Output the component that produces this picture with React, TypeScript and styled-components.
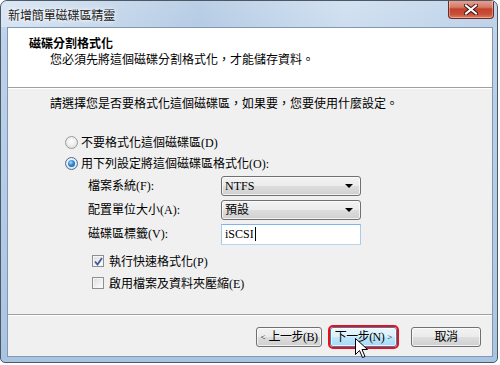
import React from "react";
import styled, { createGlobalStyle } from "styled-components";

const Global = createGlobalStyle`
  html, body { margin: 0; padding: 0; background: #ffffff; }
  body { font-family: "Liberation Serif", "Noto Sans CJK TC", serif; font-size: 12px; color: #000; }
  * { box-sizing: border-box; }
`;

const Win = styled.div`
  position: relative;
  width: 498px;
  height: 363px;
  border: 1px solid #4d5866;
  border-radius: 7px 7px 5px 5px;
  background: linear-gradient(to bottom, #c9dbee 0%, #bcd2ea 12%, #b3cbe6 60%, #a9c4e2 100%);
  display: flex;
  flex-direction: column;
  overflow: hidden;
`;

const TitleBar = styled.div`
  height: 26px;
  display: flex;
  justify-content: space-between;
  align-items: flex-start;
  padding-left: 7px;
  padding-right: 3px;
  background: linear-gradient(to right, rgba(255,255,255,0.35), rgba(160,185,215,0.35) 40%, rgba(255,255,255,0.2) 70%, rgba(180,200,225,0.3));
`;

const Title = styled.div`
  margin-top: 7px;
  font-size: 12px;
  line-height: 16px;
  color: #1a1a1a;
  text-shadow: 0 0 6px #fff, 0 0 3px #fff;
  letter-spacing: -0.1px;
`;

const CloseBtn = styled.div`
  width: 46px;
  height: 19px;
  margin-top: -1px;
  border: 1px solid #6b2a22;
  border-top: none;
  border-radius: 0 0 4px 4px;
  background: linear-gradient(to bottom, #e8a697 0%, #d57a68 40%, #c1412c 50%, #c8503a 80%, #e07d5f 100%);
  box-shadow: inset 0 0 0 1px rgba(255,255,255,0.35);
  display: flex;
  align-items: center;
  justify-content: center;
`;

const Client = styled.div`
  flex: 1;
  margin: 0 4px 5px 6px;
  border: 1px solid #8297b1;
  display: flex;
  flex-direction: column;
  background: #f0f0f0;
`;

const Header = styled.div`
  height: 60px;
  background: #ffffff;
  border-bottom: 1px solid #a0a0a0;
  box-shadow: 0 1px 0 #ffffff;
  padding: 8px 0 0 21px;
`;

const HeadTitle = styled.div`
  font-weight: 700;
  line-height: 16px;
  font-size: 12px;
`;

const HeadSub = styled.div`
  line-height: 16px;
  padding-left: 21px;
`;

const Body = styled.div`
  flex: 1;
  padding: 8px 0 0 42px;
  display: flex;
  flex-direction: column;
`;

const Intro = styled.div`
  line-height: 16px;
`;

const Options = styled.div`
  margin-top: 20px;
  padding-left: 15px;
  display: flex;
  flex-direction: column;
  gap: 1px;
`;

const OptRow = styled.div`
  height: 20px;
  display: flex;
  align-items: center;
  gap: 3px;
`;

const Radio = styled.span<{ $on?: boolean }>`
  width: 13px;
  height: 13px;
  border-radius: 50%;
  border: 1px solid ${(p) => (p.$on ? "#4b6a9b" : "#9a9a9a")};
  background: radial-gradient(circle at 50% 40%, #ffffff 0%, #e9e9e9 60%, #cfcfcf 100%);
  display: flex;
  align-items: center;
  justify-content: center;
  flex-shrink: 0;
  &::after {
    content: "";
    display: ${(p) => (p.$on ? "block" : "none")};
    width: 7px;
    height: 7px;
    border-radius: 50%;
    background: radial-gradient(circle at 40% 35%, #a9dcfa 0%, #2e8ad8 45%, #0d4b9a 100%);
  }
`;

const Fields = styled.div`
  display: grid;
  grid-template-columns: 133px 140px;
  grid-auto-rows: 24px;
  align-items: center;
  padding-left: 23px;
`;

const Label = styled.div`
  line-height: 16px;
`;

const Select = styled.div`
  height: 20px;
  border: 1px solid #707070;
  border-radius: 3px;
  background: linear-gradient(to bottom, #f3f3f3 0%, #ebebeb 48%, #dddddd 52%, #cfcfcf 100%);
  box-shadow: inset 0 0 0 1px rgba(255,255,255,0.7);
  display: flex;
  align-items: center;
  justify-content: space-between;
  padding: 0 7px 0 3px;
  line-height: 16px;
`;

const Arrow = styled.span`
  width: 0;
  height: 0;
  border-left: 4px solid transparent;
  border-right: 4px solid transparent;
  border-top: 4px solid #000;
`;

const TextBox = styled.div`
  height: 21px;
  border: 1px solid #abadb3;
  border-color: #7eb4ea #a5cbf1 #b7d5f3 #a5cbf1;
  background: #fff;
  display: flex;
  align-items: center;
  padding-left: 3px;
  line-height: 16px;
`;

const Caret = styled.span`
  display: inline-block;
  width: 1px;
  height: 14px;
  background: #000;
  margin-left: 1px;
`;

const Checks = styled.div`
  margin-top: 4px;
  padding-left: 27px;
  display: flex;
  flex-direction: column;
  gap: 2px;
`;

const Check = styled.span`
  width: 12px;
  height: 12px;
  border: 1px solid #8e8f8f;
  background: linear-gradient(135deg, #dcdcdc 0%, #f4f4f4 70%, #ffffff 100%);
  box-shadow: inset 0 0 0 1px #f6f6f6;
  display: flex;
  align-items: center;
  justify-content: center;
  flex-shrink: 0;
  margin-right: 2px;
`;

const Footer = styled.div`
  height: 42px;
  border-top: 1px solid #a0a0a0;
  box-shadow: inset 0 1px 0 #ffffff;
  display: flex;
  align-items: flex-start;
  justify-content: flex-end;
  padding: 12px 11px 0 0;
`;

const Btn = styled.div<{ $w: number; $hot?: boolean; $gap?: number }>`
  width: ${(p) => p.$w}px;
  height: 20px;
  margin-left: ${(p) => p.$gap ?? 0}px;
  border: 1px solid ${(p) => (p.$hot ? "#3c7fb1" : "#707070")};
  border-radius: 3px;
  background: ${(p) =>
    p.$hot
      ? "linear-gradient(to bottom, #eaf6fd 0%, #d9f0fc 48%, #bee6fd 52%, #a7d9f5 100%)"
      : "linear-gradient(to bottom, #f2f2f2 0%, #ebebeb 48%, #dddddd 52%, #cfcfcf 100%)"};
  box-shadow: inset 0 0 0 1px rgba(255,255,255,0.7);
  outline: ${(p) => (p.$hot ? "2px solid #e8101c" : "none")};
  display: flex;
  align-items: center;
  justify-content: center;
  line-height: 16px;
  gap: 3px;
  letter-spacing: -0.5px;
  white-space: nowrap;
`;

const Small = styled.span`
  font-size: 9px;
  letter-spacing: 0;
`;

const Cursor = styled.svg`
  position: absolute;
  left: 354px;
  top: 337px;
`;

export default function App() {
  return (
    <>
      <Global />
      <Win>
        <TitleBar>
          <Title>新增簡單磁碟區精靈</Title>
          <CloseBtn>
            <svg width="14" height="11" viewBox="0 0 14 11">
              <path d="M2 1.5 L12 9.5 M12 1.5 L2 9.5" stroke="#3b1410" strokeWidth="4" strokeLinecap="square" />
              <path d="M2 1.5 L12 9.5 M12 1.5 L2 9.5" stroke="#ffffff" strokeWidth="2" strokeLinecap="square" />
            </svg>
          </CloseBtn>
        </TitleBar>
        <Client>
          <Header>
            <HeadTitle>磁碟分割格式化</HeadTitle>
            <HeadSub>您必須先將這個磁碟分割格式化，才能儲存資料。</HeadSub>
          </Header>
          <Body>
            <Intro>請選擇您是否要格式化這個磁碟區，如果要，您要使用什麼設定。</Intro>
            <Options>
              <OptRow>
                <Radio />
                <span>不要格式化這個磁碟區(D)</span>
              </OptRow>
              <OptRow>
                <Radio $on />
                <span>用下列設定將這個磁碟區格式化(O):</span>
              </OptRow>
              <Fields>
                <Label>檔案系統(F):</Label>
                <Select>
                  <span>NTFS</span>
                  <Arrow />
                </Select>
                <Label>配置單位大小(A):</Label>
                <Select>
                  <span>預設</span>
                  <Arrow />
                </Select>
                <Label>磁碟區標籤(V):</Label>
                <TextBox>
                  <span>iSCSI</span>
                  <Caret />
                </TextBox>
              </Fields>
              <Checks>
                <OptRow>
                  <Check>
                    <svg width="9" height="9" viewBox="0 0 9 9">
                      <path d="M1 4.5 L3.5 7.5 L8 1" stroke="#3d5a9a" strokeWidth="1.8" fill="none" />
                    </svg>
                  </Check>
                  <span>執行快速格式化(P)</span>
                </OptRow>
                <OptRow>
                  <Check />
                  <span>啟用檔案及資料夾壓縮(E)</span>
                </OptRow>
              </Checks>
            </Options>
          </Body>
          <Footer>
            <Btn $w={66}>
              <Small>&lt;</Small>
              <span>上一步(B)</span>
            </Btn>
            <Btn $w={67} $hot $gap={8}>
              <span>下一步(N)</span>
              <Small>&gt;</Small>
            </Btn>
            <Btn $w={70} $gap={14}>
              <span>取消</span>
            </Btn>
          </Footer>
        </Client>
        <Cursor width="13" height="21" viewBox="0 0 13 21">
          <path d="M0.5 0.5 L0.5 16.5 L4.5 12.5 L7.5 19.5 L10 18.5 L7 11.5 L12.5 11.5 Z" fill="#ffffff" stroke="#000000" strokeWidth="1" strokeLinejoin="miter" />
        </Cursor>
      </Win>
    </>
  );
}
